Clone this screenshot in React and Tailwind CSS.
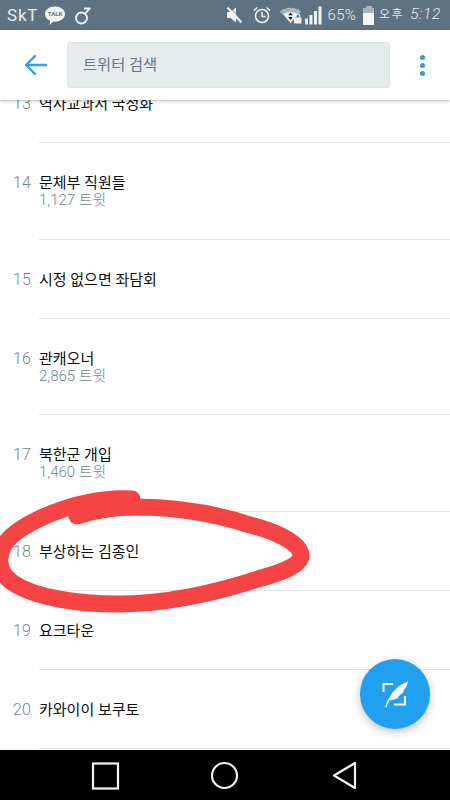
const FONT = 'font-["Roboto","Noto_Sans_CJK_KR",sans-serif]';

const trends = [
  { rank: 13, title: '역사교과서 국정화' },
  { rank: 14, title: '문체부 직원들', count: '1,127 트윗' },
  { rank: 15, title: '시정 없으면 좌담회' },
  { rank: 16, title: '관캐오너', count: '2,865 트윗' },
  { rank: 17, title: '북한군 개입', count: '1,460 트윗' },
  { rank: 18, title: '부상하는 김종인' },
  { rank: 19, title: '요크타운' },
  { rank: 20, title: '카와이이 보쿠토' },
];

function StatusLeft() {
  return (
    <div className="flex items-center">
      <span className="ml-[7px] text-[17px] leading-none tracking-[0.8px] text-[#e8edf0]">SkT</span>
      <svg width="22" height="22" viewBox="0 0 22 22" className="ml-[6px] mt-[2px]">
        <path d="M11 1.5c5.8 0 10 3.2 10 7.6s-4.2 7.6-10 7.6c-.6 0-1.1 0-1.7-.1L5.6 20l.5-4.3C2.9 14.400 1 12 1 9.100 1 4.700 5.200 1.500 11 1.500z" fill="#f1f4f5" />
        <text x="11" y="11.300" textAnchor="middle" fontSize="6" fontWeight="700" fill="#5f7282" fontFamily="Roboto, sans-serif">TALK</text>
      </svg>
      <svg width="18" height="20" viewBox="0 0 18 20" fill="none" stroke="#f1f4f5" strokeWidth="1.800" className="ml-[8px] mt-[1px]">
        <circle cx="7.500" cy="12" r="5.500" />
        <path d="M11 8l5-6M10 2.500h6.500" />
      </svg>
    </div>
  );
}

function StatusRight() {
  return (
    <div className="flex items-center">
      {/* mute */}
      <svg width="17" height="18" viewBox="0 0 17 18">
        <path d="M1 6h3.500L10 1.500v15L4.500 12H1z" fill="#eef2f3" />
        <path d="M1.500 1.500l14 15" stroke="#eef2f3" strokeWidth="2.200" />
        <path d="M1.500 1.500l14 15" stroke="#5f7282" strokeWidth="0.700" transform="translate(1.600 -1.200)" />
      </svg>
      {/* alarm */}
      <svg width="18" height="18" viewBox="0 0 18 18" fill="none" stroke="#eef2f3" strokeWidth="1.500" className="ml-[10px]">
        <circle cx="9" cy="10" r="6.500" />
        <path d="M9 6v4.500h3.500M1 4.500L4.500 1.500M17 4.500L13.500 1.500" />
      </svg>
      {/* wifi with lock */}
      <svg width="22" height="18" viewBox="0 0 22 18" className="ml-[9px]">
        <path d="M0 5.500C5.500.5 15.500.5 21 5.500L10.500 17z" fill="#a9b5bd" />
        <path d="M3.500 8C7 5.500 14 5.500 17.500 8l-7 9z" fill="#eef2f3" />
        <path d="M10.500 6.500l2.200 2.800H8.300zM10.500 14l2.200-3H8.300z" fill="#111" />
        <rect x="14" y="11.500" width="7.500" height="6" rx="0.800" fill="#eef2f3" />
        <path d="M15.800 11.500V10a2 2 0 014 0v1.500" fill="none" stroke="#eef2f3" strokeWidth="1.100" />
      </svg>
      {/* signal */}
      <svg width="17" height="19" viewBox="0 0 17 19" fill="#eef2f3" className="ml-[3px]">
        <rect x="0" y="12.500" width="3" height="6" opacity="0.900" />
        <rect x="4.500" y="9" width="3" height="9.500" />
        <rect x="9" y="5" width="3" height="13.500" />
        <rect x="13.500" y="0.500" width="3" height="18" />
      </svg>
      <span className="ml-[6px] text-[15px] leading-none tracking-[0.3px] font-light text-[#e8edf0]">65%</span>
      {/* battery */}
      <div className="ml-[7px] flex flex-col items-center">
        <div className="h-[2px] w-[6px] bg-[#a9b5bd]" />
        <div className="h-[5px] w-[11px] bg-[#a9b5bd]" />
        <div className="h-[12px] w-[11px] bg-[#f3f5f6]" />
      </div>
      <span className="ml-[5px] text-[11.500px] leading-none tracking-[2px] text-[#e8edf0]">오후</span>
      <span className="ml-[6px] mr-[9px] text-[15.500px] leading-none tracking-[0.6px] font-light italic text-[#e8edf0]">5:12</span>
    </div>
  );
}

function TrendRow({ rank, title, count }) {
  return (
    <div className="flex">
      <div className="w-[39px] shrink-0 pl-[13px] pt-[30px] text-[16px] leading-[20px] font-light text-[#76838c]">{rank}</div>
      <div className={`flex-1 border-b border-[#dfe4e7] pt-[30px] ${count ? 'h-[96.4px]' : 'h-[79px]'}`}>
        <div className="text-[15px] leading-[20px] text-[#0b0d0f]">{title}</div>
        {count && <div className="-mt-[3px] text-[15px] leading-[20px] font-light text-[#76838c]">{count}</div>}
      </div>
    </div>
  );
}

export default function App() {
  return (
    <div className={`relative flex h-[800px] w-[450px] flex-col overflow-hidden bg-white ${FONT}`}>
      <div className="flex h-[30px] shrink-0 items-center justify-between bg-[#5f7282]">
        <StatusLeft />
        <StatusRight />
      </div>

      <div className="relative z-10 flex h-[70px] shrink-0 items-center bg-white shadow-[0_1px_3px_rgba(0,0,0,0.3)]">
        <svg width="24" height="22" viewBox="0 0 24 22" fill="none" stroke="#2aa3ef" strokeWidth="2.400" strokeLinecap="round" strokeLinejoin="round" className="ml-[24px]">
          <path d="M22 11H2M11 2l-9 9 9 9" />
        </svg>
        <div className="ml-[19px] flex h-[46px] w-[323px] items-center rounded-[3px] border border-[#dfe4e6] bg-[#e6ebed] pl-[15px] pt-[1px] text-[15.300px] text-[#657786]">
          트위터 검색
        </div>
        <div className="ml-[30px] flex flex-col gap-[3px]">
          <div className="size-[5px] rounded-full bg-[#2b9bdc]" />
          <div className="size-[5px] rounded-full bg-[#2b9bdc]" />
          <div className="size-[5px] rounded-full bg-[#2b9bdc]" />
        </div>
      </div>

      <div className="min-h-0 flex-1 overflow-hidden">
        <div className="-mt-[35.6px]">
          {trends.map((t) => (
            <TrendRow key={t.rank} {...t} />
          ))}
        </div>
      </div>

      <div className="flex h-[50px] shrink-0 items-center bg-black">
        <svg width="450" height="50" viewBox="0 0 450 50" fill="none" stroke="#f2f2f2" strokeWidth="2.200">
          <rect x="93" y="13.500" width="25" height="25" />
          <circle cx="224.500" cy="25.500" r="12.500" />
          <path d="M355 13v25l-21-12.500z" strokeLinejoin="round" />
        </svg>
      </div>

      {/* red marker scribble on top of the screenshot */}
      <svg width="450" height="800" viewBox="0 0 450 800" fill="none" className="pointer-events-none absolute inset-0 z-20">
        <path
          d="M77 516C95 510 115 507 135 507C165 507 205 510 250 525C282 533 301 545 301 556C300 566 280 573 258 579C215 593 165 604 118 604C78 604 36 598 13 583C0 574 -4 560 4 545C15 527 55 509 90 502C105 499 118 498 132 499"
          stroke="#f64444"
          strokeWidth="17"
          strokeLinecap="round"
          strokeLinejoin="round"
        />
      </svg>

      {/* compose button */}
      <div className="absolute left-[360px] top-[659px] z-20 flex size-[70px] items-center justify-center rounded-full bg-[#22a0f0] shadow-[0_3px_8px_rgba(0,0,0,0.25)]">
        <svg width="28" height="28" viewBox="0 0 28 28" fill="none">
          <path d="M13 4H3.500v8M25 16v8.500H14" stroke="#fff" strokeWidth="2" transform="translate(-1 0)" />
          <path d="M4 27C8 16 14 6 27 1.500C26 7 24 9 22 10.500L23 11C21 14 19 15 17 16.500L18 17C15 19.500 11 20 8.500 20.500C7 23 6 25 5.500 27.500z" fill="#fff" />
        </svg>
      </div>
    </div>
  );
}
